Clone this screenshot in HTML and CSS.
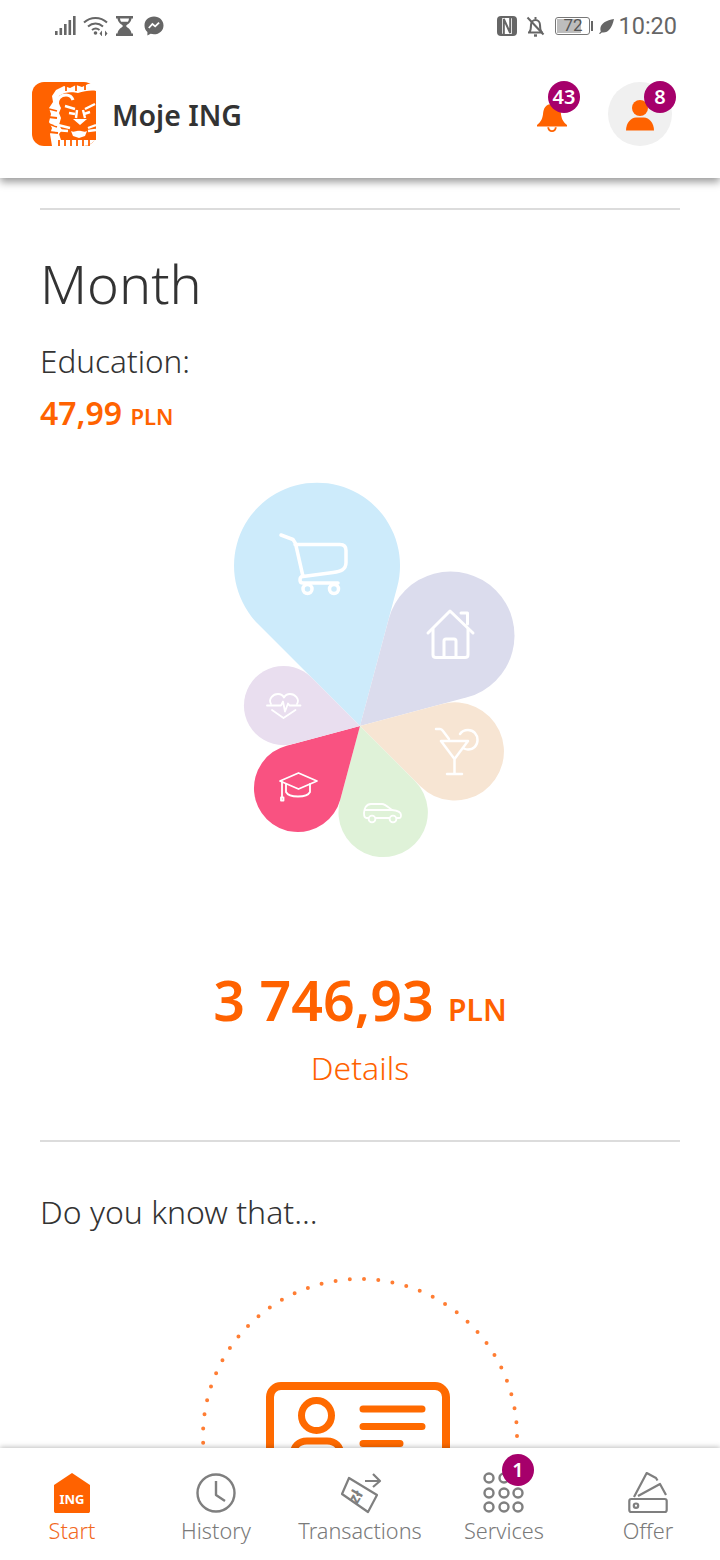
FILE: index.html
```html
<!DOCTYPE html>
<html lang="en">
<head>
    <meta charset="UTF-8">
    <meta name="viewport" content="width=device-width, initial-scale=1.0">
    <title>Moje ING</title>
    <link rel="stylesheet" href="styles.css">
</head>
<body>
    <div class="top-wrap">
        <div class="status-bar">
            <div class="status-left">
                <svg width="21" height="20" viewBox="0 0 21 20" fill="#666"><rect x="0" y="15" width="2.600" height="4"/><rect x="4.500" y="12" width="2.600" height="7"/><rect x="9" y="8" width="2.600" height="11"/><rect x="13.500" y="4" width="2.600" height="15"/><rect x="18" y="0" width="2.600" height="19"/></svg>
                <svg width="26" height="20" viewBox="0 0 26 20" fill="none" stroke="#666" stroke-width="2"><path d="M1 6.500C7.500 .5 17.500 .5 24 6.500"/><path d="M5 10.500C9.500 6.500 15.500 6.500 20 10.500"/><path d="M9 14C11.500 12 14 12 16.500 14"/><circle cx="12.500" cy="17" r="1.800" fill="#666" stroke="none"/><path d="M19 14.500l-2.500 3 2.500 3zM22 14.500l2.500 3-2.500 3z" fill="#666" stroke="none"/></svg>
                <svg width="17" height="20" viewBox="0 0 17 20"><path fill="#666" d="M0 0h17v2.500h-1.500C15 7 11.500 8 10 10c1.500 2 5 3 5.500 7.500H17V20H0v-2.500h1.500C2 13 5.500 12 7 10 5.500 8 2 7 1.500 2.500H0z"/><path fill="#fff" d="M4 2.500h9c-.2 1.500-.6 2.500-1.200 3.300H5.200C4.600 5 4.200 4 4 2.500z"/></svg>
                <svg class="msgr" width="20" height="20" viewBox="0 0 20 20"><path fill="#666" d="M10 .5C4.500 .5.500 4.300.500 9.400c0 2.700 1.100 5 2.900 6.600v3.500l3.200-1.800c1.100.3 2.200.5 3.400.5 5.500 0 9.500-3.800 9.500-8.800S15.500.5 10 .5z"/><path fill="none" stroke="#fff" stroke-width="1.800" d="M4.800 12l3.600-4 2.800 2.400 3.900-3.800"/></svg>
            </div>
            <div class="status-right">
                <svg width="20" height="20" viewBox="0 0 20 20"><rect width="20" height="20" rx="4" fill="#666"/><rect x="5" y="2" width="10" height="16" rx="1" fill="#fff"/><path d="M6.800 18V3l6.400 14V2" fill="none" stroke="#666" stroke-width="2"/></svg>
                <svg class="bell-off" width="19" height="21" viewBox="0 0 19 21" fill="none" stroke="#666" stroke-width="2"><path d="M2 16.500h15M3.500 16c1.500-2 1.500-4 1.500-7 0-3 2-5 4.500-5s4.500 2 4.500 5c0 3 0 5 1.500 7"/><path d="M1.500 1.500l16 17"/><path d="M8 19.500h3" stroke-width="2.400"/><path d="M9.500 1v2"/></svg>
                <div class="battery"><span class="battery-fill"></span><span class="battery-num">72</span></div>
                <span class="battery-tip"></span>
                <svg width="15" height="15" viewBox="0 0 15 15" fill="#666"><path d="M15 0C13 9 9 14.500 2.800 13.500L1 15l-1-.6 1.800-1.900C-.5 6 6.500 1 15 0z"/></svg>
                <span class="clock">10:20</span>
            </div>
        </div>
        <header class="app-header">
            <div class="brand">
                <svg class="logo" width="64" height="64" viewBox="0 0 64 64">
                    <rect width="64" height="64" rx="12" fill="#ff6200"/>
                    <path fill="#fff" d="M24 8l8-4 6 2 6-3 6 2 6-3 8-1v52a12 12 0 0 1-12 11H20l-2-12 2-6-3-6 2-8-2-6 4-6-1-6z"/>
                    <path fill="#ff6200" d="M27 14c6-5 15-4 19-3 6-2 14-3 18-2v49H29l-2-6 3-4-3-5 2-7-2-5 2-5-3-6z"/>
                    <path d="M26 24c-2-7 3-11 8-11 3 0 6 2 7 5" fill="none" stroke="#fff" stroke-width="3"/>
                    <g fill="none" stroke="#ff6200" stroke-width="1.800">
                        <path d="M17 27l8 2M16 35l9 1M17 42l8 3M17 50l9 1"/>
                        <path d="M27 64v-6M33 64v-6M39 64v-6M45 64v-6M51 64v-6M57 64v-6"/>
                        <path d="M34 3v6M44 2v7M53 1v7"/>
                    </g>
                    <g fill="none" stroke="#fff" stroke-width="2.400">
                        <path d="M33 24l10 3M63 22l-10 5"/>
                        <path d="M37 31l6 1M58 30l-6 2"/>
                        <path d="M45 28l-1 8M51 28l2 8"/>
                        <path d="M22 42l16 4M64 43l-8 3"/>
                        <path d="M23 48l13 1M64 48l-8 1"/>
                    </g>
                    <path fill="#fff" d="M41 37h14l-7 6zM39 49c3 2 6-1 8 0 2-1 5 2 8 0l-2 5-6 2-6-2z"/>
                </svg>
                <span class="brand-name">Moje ING</span>
            </div>
            <div class="header-actions">
                <div class="bell-btn">
                    <svg width="30" height="34" viewBox="0 0 32 36" fill="#ff6200"><path d="M16 4C9 4 7 9 6.500 14c-.4 5-2 9-6.500 12.500V28h32v-1.500C27.500 23 25.900 19 25.500 14 25 9 23 4 16 4z"/><path d="M12 29a4 4 0 0 0 8 0" fill="none" stroke="#ff6200" stroke-width="2"/></svg>
                    <span class="badge">43</span>
                </div>
                <div class="user-btn">
                    <svg width="30" height="31" viewBox="0 0 30 31" fill="#ff6200"><circle cx="15" cy="8" r="8"/><path d="M1 30.500C1 23 6 17.500 11 17.500h8c5 0 10 5.500 10 13z"/></svg>
                    <span class="badge">8</span>
                </div>
            </div>
        </header>
    </div>

    <main class="content">
        <hr class="divider first">
        <h1 class="title">Month</h1>
        <p class="category">Education:</p>
        <p class="cat-amount">47,99 <small>PLN</small></p>

        <div class="chart">
            <svg width="320" height="400" viewBox="200 470 320 400">
                <path fill="#cdebfb" d="M360 725L258.300 623.300A83 83 0 1 1 397.200 586.100Z"/>
                <path fill="#dbdced" d="M360 725L388.700 617.900A64 64 0 1 1 467.100 696.300Z"/>
                <path fill="#f7e5d3" d="M360 725L442.100 703A49.100 49.100 0 1 1 420.100 785.100Z"/>
                <path fill="#dff2d8" d="M360 725L414.700 779.700A44.700 44.700 0 1 1 340 799.800Z"/>
                <path fill="#f95281" d="M360 725L340.300 798.400A43.900 43.900 0 1 1 286.600 744.700Z"/>
                <path fill="#e9deef" d="M360 725L293.700 742.800A39.600 39.600 0 1 1 311.500 676.500Z"/>
                <g fill="none" stroke="#fff" stroke-linecap="round" stroke-linejoin="round">
                    <g stroke-width="3.500">
                        <path d="M281 534l12 4.500 2.500 4 7.500 33 30-4c8-1 13-3 13-10v-12c0-4-1.500-6-6-6h-45"/>
                        <path d="M303 575c-4 1-4 7 0 7h35"/>
                        <circle cx="307.500" cy="588" r="4.500"/>
                        <circle cx="334" cy="588" r="4.500"/>
                    </g>
                    <g stroke-width="3">
                        <path d="M428 632l22-22 23 22"/>
                        <path d="M433 628v26c0 2 1 2.500 3 2.500h29c2 0 3-.5 3-2.500v-26"/>
                        <path d="M444 655v-15c0-1.500.5-2 2-2h8c1.500 0 2 .5 2 2v15"/>
                        <path d="M461 612h6.500v11"/>
                    </g>
                    <g stroke-width="2.500">
                        <path d="M441 740h27l-13.500 18zM454.500 758v15M447 773h15"/>
                        <path d="M436 728h4c1 0 2 .5 3 2l6 8"/>
                        <path d="M460 733c2-3 5-4 8-4 5.500 0 9.500 4.500 9.500 10s-4 9.500-9.500 9.500c-2 0-3-.5-4-1"/>
                    </g>
                    <g stroke-width="1.800">
                        <path d="M368.500 817h-2c-2 0-2.500-2-2.500-5 0-4 2-9 7-9h11c3 0 6 3 10 6 5 .5 9 2 9 5 0 2 0 3-2 3h-2.500M389 817h-13.500"/>
                        <path d="M365 809h27"/>
                        <circle cx="372" cy="818" r="3.400"/>
                        <circle cx="393" cy="818" r="3.400"/>
                    </g>
                    <g stroke-width="1.800">
                        <path d="M280 780l18.500-8 18.500 8-18.500 8z"/>
                        <path d="M286 783v8c3 6 21 6 24 0v-8"/>
                        <path d="M282 781v15M281 796.500h2.500v3H281z"/>
                    </g>
                    <g stroke-width="1.800">
                        <path d="M271 703c-3-5 2-10 7-10 3 0 5 1.500 6 3.500 1-2 3-3.500 6-3.500 5 0 10 5 7 10"/>
                        <path d="M272 709l11.500 8 12-8"/>
                        <path d="M267 704.500h14l2-4 2 10 3-8 1.500 2h11"/>
                    </g>
                </g>
            </svg>
        </div>

        <p class="total">3 746,93 <small>PLN</small></p>
        <p class="details">Details</p>
        <hr class="divider">
        <p class="know">Do you know that...</p>
        <div class="tip-art">
            <svg width="328" height="180" viewBox="196 1272 328 180">
                <circle cx="360" cy="1436" r="157" fill="none" stroke="#ff7d33" stroke-width="4" stroke-linecap="round" stroke-dasharray="0 14.3"/>
                <g fill="none" stroke="#ff6a00">
                    <rect x="270" y="1386" width="176" height="90" rx="11" stroke-width="8"/>
                    <circle cx="316.500" cy="1415.500" r="15" stroke-width="7"/>
                    <path d="M293 1470v-14c0-10 6-15 14-15h20c8 0 14 5 14 15v14" stroke-width="7"/>
                    <path d="M363 1409h59M363 1426.500h59M363 1443.500h37" stroke-width="7" stroke-linecap="round"/>
                </g>
            </svg>
        </div>
    </main>

    <nav class="bottom-nav">
        <div class="nav-item active">
            <div class="nav-icon">
                <svg width="38" height="42" viewBox="0 0 38 42"><path fill="#ff6200" d="M19 1L37 13v26c0 1.500-.8 2-2 2H3c-1.200 0-2-.5-2-2V13z"/><text class="ing-mark" x="19" y="32" text-anchor="middle">ING</text></svg>
            </div>
            <span>Start</span>
        </div>
        <div class="nav-item">
            <div class="nav-icon">
                <svg width="40" height="40" viewBox="0 0 40 40" fill="none" stroke="#7f7f7f" stroke-width="2.400"><circle cx="20" cy="20" r="18.500"/><path d="M20 8v14l9 6" stroke-linejoin="round"/></svg>
            </div>
            <span>History</span>
        </div>
        <div class="nav-item">
            <div class="nav-icon">
                <svg width="46" height="42" viewBox="0 0 46 42" fill="none" stroke="#7f7f7f" stroke-width="2.200" stroke-linejoin="round"><path d="M12 6L40 23 31 40 5 22z"/><path d="M28 9H43M36 2L43 9 36 15"/><text class="zt-mark" transform="translate(20 33) rotate(-60)">zł</text></svg>
            </div>
            <span>Transactions</span>
        </div>
        <div class="nav-item">
            <div class="nav-icon">
                <svg width="42" height="42" viewBox="0 0 42 42" fill="none" stroke="#7f7f7f" stroke-width="2.400"><circle cx="6" cy="6" r="4.500"/><circle cx="21" cy="6" r="4.500"/><circle cx="6" cy="21" r="4.500"/><circle cx="21" cy="21" r="4.500"/><circle cx="35" cy="21" r="4.500"/><circle cx="6" cy="35" r="4.500"/><circle cx="21" cy="35" r="4.500"/><circle cx="35" cy="35" r="4.500"/></svg>
                <span class="badge nav-badge">1</span>
            </div>
            <span>Services</span>
        </div>
        <div class="nav-item">
            <div class="nav-icon">
                <svg width="40" height="42" viewBox="0 0 40 42" fill="none" stroke="#7f7f7f" stroke-width="2.200" stroke-linejoin="round"><rect x="1.300" y="27" width="37.400" height="13" rx="2"/><circle cx="8" cy="33.700" r="2.200"/><path d="M6 25L18.700 1 28 6l1.500 2.500"/><path d="M10 24l22-12 6 11"/></svg>
            </div>
            <span>Offer</span>
        </div>
    </nav>
</body>
</html>
```

FILE: styles.css
```css
html, body {
    margin: 0;
    padding: 0;
}
body {
    width: 720px;
    height: 1560px;
    overflow: hidden;
    display: flex;
    flex-direction: column;
    background-color: #fff;
    color: #333;
    font-family: "Noto Sans", sans-serif;
}
.top-wrap {
    position: relative;
    z-index: 2;
    background-color: #fff;
    box-shadow: 0 4px 8px rgba(0, 0, 0, 0.4);
}
.status-bar {
    height: 52px;
    display: flex;
    justify-content: space-between;
    align-items: center;
    padding: 0 43px 0 55px;
}
.status-left,
.status-right {
    display: flex;
    align-items: center;
}
.status-left {
    gap: 7px;
}
.status-left .msgr {
    margin-left: 4px;
}
.status-right .bell-off {
    margin: 0 10px 0 9px;
}
.battery {
    position: relative;
    width: 35px;
    height: 18px;
    border: 1.500px solid #777;
    border-radius: 3px;
    box-sizing: border-box;
}
.battery-fill {
    position: absolute;
    left: 1px;
    top: 1px;
    bottom: 1px;
    width: 72%;
    background-color: #bdbdbd;
}
.battery-num {
    position: absolute;
    left: 0;
    right: 0;
    top: -3px;
    text-align: center;
    font: 17px/20px "Roboto", sans-serif;
    color: #555;
}
.battery-tip {
    width: 2px;
    height: 10px;
    margin: 0 6px 0 1px;
    background-color: #666;
}
.clock {
    margin-left: 4px;
    font: 23.500px "Roboto", sans-serif;
    color: #666;
}
.app-header {
    height: 126px;
    box-sizing: border-box;
    padding: 30px 48px 32px 32px;
    display: flex;
    justify-content: space-between;
}
.brand {
    display: flex;
    align-items: center;
    gap: 16px;
}
.brand-name {
    margin-top: 1px;
    font-size: 28.500px;
    font-weight: 600;
    color: #333;
}
.header-actions {
    display: flex;
    align-items: center;
    gap: 41px;
}
.bell-btn,
.user-btn {
    position: relative;
    display: flex;
    align-items: center;
    justify-content: center;
}
.bell-btn svg {
    margin-top: 5px;
}
.user-btn {
    width: 64px;
    height: 64px;
    border-radius: 50%;
    background-color: #f0f0f0;
}
.user-btn svg {
    margin-top: 3px;
}
.badge {
    position: absolute;
    width: 32px;
    height: 32px;
    border-radius: 50%;
    background-color: #a6006b;
    color: #fff;
    font-size: 20px;
    font-weight: 600;
    line-height: 31px;
    text-align: center;
}
.bell-btn .badge {
    top: -14px;
    right: -13px;
}
.user-btn .badge {
    top: -1px;
    right: -4px;
}
.content {
    flex: 1;
    min-height: 0;
    overflow: hidden;
    padding: 0 40px;
}
.divider {
    margin: 0;
    border: none;
    height: 2px;
    background-color: #dcdcdc;
}
.divider.first {
    margin-top: 30px;
}
.title {
    margin: 37px 0 0;
    font-size: 54px;
    font-weight: 300;
    line-height: 72px;
    color: #333;
}
.category {
    margin: 22px 0 0;
    font-size: 31.500px;
    font-weight: 300;
    line-height: 40px;
}
.cat-amount {
    margin: 12px 0 0;
    font-size: 32px;
    font-weight: 600;
    line-height: 40px;
    color: #ff6200;
}
.cat-amount small {
    font-size: 22px;
}
.chart {
    display: flex;
    justify-content: center;
    margin-top: 35px;
}
.chart svg {
    display: block;
}
.total {
    margin: 93px 0 0;
    text-align: center;
    font-size: 55.500px;
    font-weight: 600;
    line-height: 72px;
    color: #ff6200;
}
.total small {
    font-size: 30px;
}
.details {
    margin: 2px 0 0;
    text-align: center;
    font-size: 32px;
    font-weight: 300;
    line-height: 40px;
    color: #ff6200;
}
.content > .divider:not(.first) {
    margin-top: 52px;
}
.know {
    margin: 50px 0 0;
    font-size: 32px;
    font-weight: 300;
    line-height: 40px;
}
.tip-art {
    display: flex;
    justify-content: center;
    margin-top: 40px;
}
.tip-art svg {
    display: block;
}
.bottom-nav {
    position: relative;
    z-index: 2;
    height: 112px;
    flex-shrink: 0;
    display: grid;
    grid-template-columns: repeat(5, 144px);
    background-color: #fff;
    box-shadow: 0 -1px 5px rgba(0, 0, 0, 0.25);
}
.nav-item {
    display: flex;
    flex-direction: column;
    align-items: center;
    color: #7a7a7a;
    font-size: 21.700px;
    font-weight: 300;
}
.nav-item.active {
    color: #f2691e;
}
.nav-icon {
    position: relative;
    height: 42px;
    margin-top: 24px;
    margin-bottom: 2px;
    display: flex;
    align-items: center;
}
.nav-badge {
    top: -18px;
    left: 19px;
}
.ing-mark {
    fill: #fff;
    font-size: 13px;
    font-weight: 700;
}
.zt-mark {
    fill: #7f7f7f;
    stroke: none;
    font-size: 16px;
    font-weight: 700;
}
```
